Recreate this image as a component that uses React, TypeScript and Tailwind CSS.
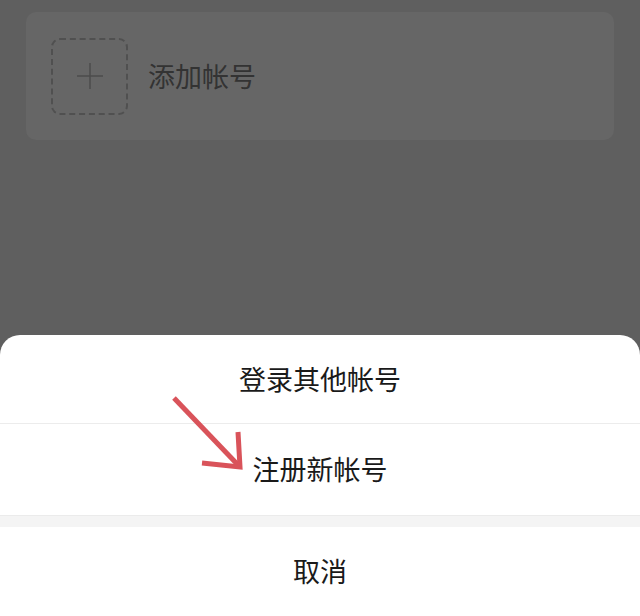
const font = { fontFamily: '"Noto Sans CJK SC", "Noto Sans", sans-serif' };

export default function App() {
  return (
    <div className="relative w-[640px] h-[616px] bg-[#5f5f5f] overflow-hidden flex flex-col" style={font}>
      {/* Dimmed page behind the sheet */}
      <div className="px-[26px] pt-[12px]">
        <div className="h-[128px] rounded-[10px] bg-[#666666] flex items-center px-[25px] gap-[20px]">
          <div className="w-[77px] h-[77px] rounded-[9px] border-2 border-dashed border-[#505050] flex items-center justify-center">
            <svg width="28" height="28" viewBox="0 0 28 28">
              <g stroke="#4c4c4c" strokeWidth="1.5">
                <line x1="14" y1="1" x2="14" y2="27" />
                <line x1="1" y1="14" x2="27" y2="14" />
              </g>
            </svg>
          </div>
          <span className="text-[27px] text-[#333333]">添加帐号</span>
        </div>
      </div>

      {/* Action sheet */}
      <div className="mt-auto bg-white rounded-t-[20px] flex flex-col">
        <button className="h-[89px] flex items-center justify-center text-[27px] text-[#1a1a1a] border-b border-[#ececec]">
          登录其他帐号
        </button>
        <button className="h-[91px] flex items-center justify-center text-[27px] text-[#1a1a1a]">
          注册新帐号
        </button>
        <div className="h-[12px] bg-[#f4f4f4] border-t border-[#ebebeb]" />
        <button className="h-[89px] flex items-center justify-center text-[27px] text-[#1a1a1a]">
          取消
        </button>
      </div>

      {/* Annotation arrow */}
      <svg className="absolute left-0 top-0 pointer-events-none" width="640" height="616">
        <g stroke="#d9535a" strokeWidth="5" fill="none" strokeLinecap="butt" strokeLinejoin="miter">
          <line x1="174" y1="398" x2="239" y2="466" />
          <polyline points="202,463 240,467 238,432" />
        </g>
      </svg>
    </div>
  );
}
